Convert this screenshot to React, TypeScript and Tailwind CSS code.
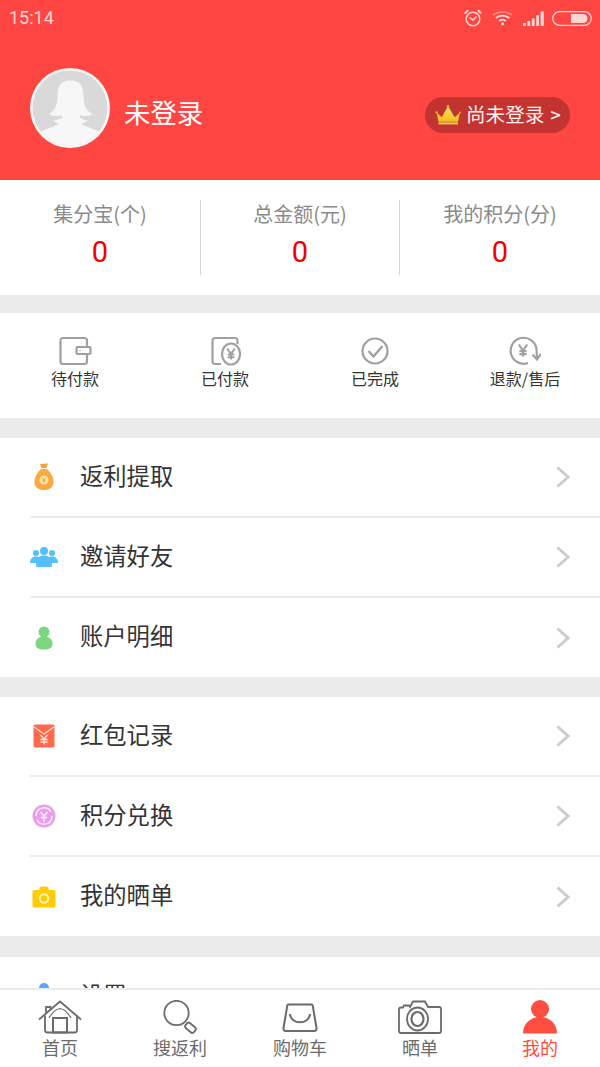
import React from 'react';

const FONT = '"Noto Sans CJK SC", Roboto, sans-serif';

const Alarm = () => (
  <svg width="18" height="18" viewBox="0 0 18 18" fill="none" stroke="#ffd6d4" strokeWidth="1.5">
    <circle cx="9" cy="10" r="6.8" />
    <path d="M5.5 8.5 L9 11 L12.5 7.5" />
    <path d="M0.8 4.5 L4.2 1.2 M17.2 4.5 L13.8 1.2" strokeWidth="2" />
  </svg>
);

const Wifi = () => (
  <svg width="21" height="16" viewBox="0 0 22 16" fill="none">
    <path d="M1 5 C6 0.5 16 0.5 21 5" stroke="#ff8f8b" strokeWidth="1.6" />
    <path d="M4 8 C8 4.6 14 4.6 18 8" stroke="#ffe2e0" strokeWidth="1.8" />
    <path d="M7.5 11 C9.5 9.4 12.5 9.4 14.5 11" stroke="#ffe2e0" strokeWidth="1.8" />
    <circle cx="11" cy="14" r="1.6" fill="#ffe2e0" />
  </svg>
);

const Signal = () => (
  <svg width="21" height="15" viewBox="0 0 21 15" fill="#ffd6d4">
    <rect x="0" y="12" width="2.8" height="3" />
    <rect x="4.4" y="10" width="2.8" height="5" />
    <rect x="8.8" y="7.5" width="2.8" height="7.5" />
    <rect x="13.2" y="4" width="2.8" height="11" />
    <rect x="17.6" y="0.5" width="3.2" height="14.5" />
  </svg>
);

const Battery = () => (
  <svg width="40" height="15" viewBox="0 0 40 15" fill="none">
    <rect x="0.7" y="0.7" width="38.6" height="13.6" rx="6.8" stroke="#ffd6d4" strokeWidth="1.3" />
    <path d="M19 3 H31 a4.5 4.5 0 0 1 0 9 H19 Z" fill="#ffd6d4" />
  </svg>
);

const Avatar = () => (
  <svg width="80" height="80" viewBox="0 0 80 80">
    <circle cx="40" cy="40" r="40" fill="#f7f7f7" />
    <circle cx="40" cy="40" r="37.5" fill="#d9d9d9" />
    <clipPath id="av">
      <circle cx="40" cy="40" r="37.5" />
    </clipPath>
    <g clipPath="url(#av)" fill="#f7f7f7">
      <path d="M19 46 C23 44 26 40 27 34 C28 28 27 24 29 19 C31 14 35 12.5 40 12.5 C46 12.5 50 14 52 19 C54 24 53 28 54 34 C55 40 58 44 63 46 C61 48 54 48.5 50 47.5 L50 50 L58 53 L51 56 L68 63 L80 80 H0 L12 63 L29 56 L23 53 L32 50 L32 47.5 C27 48.5 21 48 19 46 Z" />
    </g>
  </svg>
);

const Crown = () => (
  <svg width="26" height="20" viewBox="0 0 26 20">
    <defs>
      <linearGradient id="crownFill" x1="0" y1="0" x2="0" y2="1">
        <stop offset="0" stopColor="#ffe766" />
        <stop offset="1" stopColor="#f6bb1a" />
      </linearGradient>
    </defs>
    <path d="M1.7 7.7 L6.7 12.3 L13 1 L19.7 12.3 L25 7.7 L23 16.7 H3.5 Z" fill="url(#crownFill)" />
    <rect x="3.5" y="17.4" width="19.5" height="2" fill="#f8d24a" />
    <circle cx="13" cy="1.5" r="1.4" fill="#f5a623" />
    <circle cx="1.7" cy="7.5" r="1.3" fill="#f5a623" />
    <circle cx="25" cy="7.5" r="1" fill="#f5a623" />
  </svg>
);

const Wallet = () => (
  <svg width="34" height="30" viewBox="0 0 34 30" fill="none" stroke="#a0a0a0" strokeWidth="2.2">
    <path d="M29 10.5 V4.5 a2.5 2.5 0 0 0 -2.5 -2.5 H5 A2.5 2.5 0 0 0 2.5 4.5 V25.5 a2.5 2.5 0 0 0 2.5 2.5 H26.5 A2.5 2.5 0 0 0 29 25.5 V18" />
    <rect x="18.5" y="11" width="14" height="7" rx="1.2" />
    <circle cx="22" cy="14.5" r="0.7" fill="#a0a0a0" stroke="none" />
  </svg>
);

const Yen = ({ x, y, h }: { x: number; y: number; h: number }) => (
  <g stroke="#a0a0a0" strokeWidth="1.8" fill="none" transform={`translate(${x} ${y}) scale(${h / 10})`}>
    <path d="M-3.5 -5 L0 0 L3.5 -5 M0 0 V5 M-3 0.5 H3 M-3 3 H3" />
  </g>
);

const Paid = () => (
  <svg width="32" height="30" viewBox="-2 0 32 30" fill="none" stroke="#a0a0a0" strokeWidth="2.2">
    <path d="M10 28 H4 A2.5 2.5 0 0 1 1.5 25.5 V4.5 A2.5 2.5 0 0 1 4 2 H24 A2.5 2.5 0 0 1 26.5 4.5 V8" />
    <ellipse cx="20" cy="18" rx="9" ry="10.5" />
    <Yen x={20} y={18} h={11} />
  </svg>
);

const Done = () => (
  <svg width="28" height="30" viewBox="0 0 28 30" fill="none" stroke="#a0a0a0" strokeWidth="2.2">
    <circle cx="14" cy="15" r="12.5" />
    <path d="M7.5 15 L12.5 20.5 L21.5 10" strokeWidth="2.4" />
  </svg>
);

const Refund = () => (
  <svg width="32" height="30" viewBox="0 0 32 30" fill="none" stroke="#a0a0a0" strokeWidth="2.2">
    <path d="M19 27 A13 13 0 1 1 27.5 13 L28 23.5" />
    <path d="M23.5 18.5 L28 23.5 L32 18" />
    <Yen x={14} y={14.5} h={12} />
  </svg>
);

const MoneyBag = () => (
  <svg width="20" height="28" viewBox="0 0 20 28">
    <path d="M6 1 L14 0.5 L12.5 5 H7.5 Z" fill="#f2a33a" />
    <path d="M7 6 H13 C17 10 19.5 14 19.5 19 C19.5 24.5 15.5 27 10 27 C4.5 27 0.5 24.5 0.5 19 C0.5 14 3 10 7 6 Z" fill="#fba840" />
    <circle cx="10" cy="17" r="4.6" fill="#ffe2a8" />
    <path d="M8 14.5 L10 17 L12 14.5 M10 17 V20 M8.3 17.8 H11.7" stroke="#f2a33a" strokeWidth="0.9" fill="none" />
  </svg>
);

const Friends = () => (
  <svg width="28" height="20" viewBox="0 0 28 20" fill="#55c0fb">
    <circle cx="6" cy="6" r="3" />
    <circle cx="22" cy="6" r="3" />
    <circle cx="14" cy="4" r="4" />
    <path d="M0 16 C0 11 3 9.5 6 9.5 C9 9.5 12 11 12 16 H0 Z" />
    <path d="M16 16 C16 11 19 9.5 22 9.5 C25 9.5 28 11 28 16 H16 Z" />
    <path d="M6 19 C6 11 9 8.5 14 8.5 C19 8.5 22 11 22 19 Q22 20 20 20 H8 Q6 20 6 19 Z" />
  </svg>
);

const Person = () => (
  <svg width="18" height="24" viewBox="0 0 18 24" fill="#7bd67f">
    <circle cx="9" cy="6" r="5.5" />
    <path d="M0.5 18 C0.5 13 4 10.5 9 10.5 C14 10.5 17.5 13 17.5 18 C17.5 22 14 23.5 9 23.5 C4 23.5 0.5 22 0.5 18 Z" />
  </svg>
);

const RedPacket = () => (
  <svg width="22" height="24" viewBox="0 0 22 24">
    <rect x="0.5" y="0.5" width="21" height="23" rx="1.5" fill="#ff6a4d" />
    <path d="M1 3 L11 10 L21 3" stroke="#ffd9cf" strokeWidth="1.4" fill="none" />
    <path d="M7.5 11 L11 15 L14.5 11 M11 15 V20.5 M7.5 15.5 H14.5 M7.5 18 H14.5" stroke="#ffe8e2" strokeWidth="1.3" fill="none" />
  </svg>
);

const Exchange = () => (
  <svg width="24" height="24" viewBox="0 0 24 24">
    <circle cx="12" cy="12" r="11.5" fill="#e99fe9" />
    <path d="M4 12 A8 8 0 0 1 19 8 M20 12 A8 8 0 0 1 5 16" stroke="#fdeafd" strokeWidth="1.5" fill="none" />
    <path d="M8.5 8 L12 12 L15.5 8 M12 12 V18 M9 13.5 H15" stroke="#fdeafd" strokeWidth="1.5" fill="none" />
  </svg>
);

const CameraFill = () => (
  <svg width="24" height="22" viewBox="0 0 24 22">
    <path d="M2 4 H7 L8 1.5 Q8.5 0.5 9.5 0.5 H14.5 Q15.5 0.5 16 1.5 L17 4 H22 Q23.5 4 23.5 5.5 V20 Q23.5 21.5 22 21.5 H2 Q0.5 21.5 0.5 20 V5.5 Q0.5 4 2 4 Z" fill="#ffcc00" />
    <circle cx="12" cy="12.5" r="4.2" fill="none" stroke="#fff3c4" strokeWidth="2" />
  </svg>
);

const Chevron = () => (
  <svg width="14" height="22" viewBox="0 0 14 22" fill="none" stroke="#cccccc" strokeWidth="3">
    <path d="M1.5 1.5 L12 11 L1.5 20.5" />
  </svg>
);

const TabHome = () => (
  <svg width="44" height="34" viewBox="0 0 44 34" fill="none" stroke="#6b6b6b" strokeWidth="1.8">
    <path d="M1 19.5 L22 1.5 L43 19.5" />
    <path d="M8 13.5 V7 H12.5 V10" />
    <path d="M7 15.5 V30 A2.5 2.5 0 0 0 9.5 32.5 H36.5 A2.5 2.5 0 0 0 39 30 V15.5" />
    <path d="M11 18 C14 13 18 9 22 8.5 C26 9 30 13 33 18" strokeWidth="1.2" />
    <rect x="15" y="18" width="14" height="14.5" strokeWidth="2" />
  </svg>
);

const TabSearch = () => (
  <svg width="34" height="34" viewBox="0 0 34 34" fill="none" stroke="#6b6b6b" strokeWidth="1.8">
    <circle cx="13.5" cy="13" r="12.2" />
    <rect x="22" y="24.5" width="11" height="6.5" rx="2.4" transform="rotate(40 27.5 27.7)" />
  </svg>
);

const TabBag = () => (
  <svg width="36" height="30" viewBox="0 0 36 30" fill="none" stroke="#6b6b6b" strokeWidth="2">
    <path d="M6.5 2.5 H29.5 Q30.5 2.5 30.7 3.5 L34.5 26 Q34.8 29 32 29 H4 Q1.2 29 1.5 26 L5.3 3.5 Q5.5 2.5 6.5 2.5 Z" />
    <path d="M8 12 C9 23 27 23 28 12" />
  </svg>
);

const TabCamera = () => (
  <svg width="44" height="34" viewBox="0 0 44 34" fill="none" stroke="#6b6b6b" strokeWidth="1.8">
    <path d="M3 7.5 H5 L6 5.5 H11 L12 7 L15 1.5 H27 L30 7 H41 Q43 7 43 9 V31 Q43 33 41 33 H3 Q1 33 1 31 V9.5 Q1 7.5 3 7.5 Z" />
    <ellipse cx="19.5" cy="19" rx="10.5" ry="11.5" />
    <ellipse cx="19.5" cy="19" rx="6" ry="7" strokeWidth="2.2" />
  </svg>
);

const TabMe = () => (
  <svg width="34" height="34" viewBox="0 0 34 34" fill="#ff4d40">
    <circle cx="17" cy="9" r="9" />
    <path d="M0 33.5 C0 24 7 17 17 17 C27 17 34 24 34 33.5 Z" />
  </svg>
);

const stats = [
  { label: '集分宝(个)', value: '0', width: 'w-[201px] border-r border-[#d8d8d8]' },
  { label: '总金额(元)', value: '0', width: 'w-[199px] border-r border-[#d8d8d8]' },
  { label: '我的积分(分)', value: '0', width: 'w-[200px]' },
];

const orders = [
  { label: '待付款', icon: <Wallet /> },
  { label: '已付款', icon: <Paid /> },
  { label: '已完成', icon: <Done /> },
  { label: '退款/售后', icon: <Refund /> },
];

const tabs = [
  { label: '首页', icon: <TabHome /> },
  { label: '搜返利', icon: <TabSearch /> },
  { label: '购物车', icon: <TabBag /> },
  { label: '晒单', icon: <TabCamera /> },
  { label: '我的', icon: <TabMe />, active: true },
];

const Row = ({ icon, label, last }: { icon: React.ReactNode; label: string; last?: boolean }) => (
  <div className="pl-[30px]">
    <div className={`flex items-center ${last ? 'h-[79px]' : 'h-[80px] border-b-2 border-[#ececec]'}`}>
      <div className="flex w-[28px] justify-center">{icon}</div>
      <span className="ml-[22px] flex-1 pb-[3px] text-[23.3px] leading-none text-[#333333]">{label}</span>
      <div className="mr-[30px] flex">
        <Chevron />
      </div>
    </div>
  </div>
);

export default function App() {
  return (
    <div className="flex h-[1067px] w-[600px] flex-col overflow-hidden bg-white" style={{ fontFamily: FONT }}>
      <div className="min-h-0 flex-1 overflow-hidden">
        <header className="h-[180px] bg-[#ff4642]">
          <div className="flex h-[36px] items-center justify-between pl-[9px] pr-[8px]">
            <span className="text-[18px] leading-none text-[#ffd6d4]" style={{ fontFamily: 'Roboto, sans-serif' }}>15:14</span>
            <div className="flex items-center">
              <Alarm />
              <div className="ml-[10px] flex">
                <Wifi />
              </div>
              <div className="ml-[10px] flex">
                <Signal />
              </div>
              <div className="ml-[8px] flex">
                <Battery />
              </div>
            </div>
          </div>
          <div className="mt-[32px] flex items-center pl-[30px] pr-[30px]">
            <Avatar />
            <span className="ml-[14px] mt-[8px] flex-1 text-[26.4px] leading-none text-white">未登录</span>
            <div className="mt-[14px] flex h-[36px] w-[145px] items-center rounded-full bg-[#c33430] pl-[10px] text-[#fff0ef]">
              <Crown />
              <span className="ml-[5px] pb-[2px] text-[19.6px] leading-none">尚未登录</span>
              <span className="ml-[6px] pb-[2px] text-[18px] font-medium leading-none">&gt;</span>
            </div>
          </div>
        </header>

        <section className="flex h-[115px] items-center">
          {stats.map((s) => (
            <div
              key={s.label}
              className={`flex h-[75px] flex-col items-center pb-[5px] ${s.width}`}
            >
              <span className="text-[20px] leading-[28px] text-[#8a8a8a]">{s.label}</span>
              <span className="mt-[6px] text-[29px] leading-[36px] text-[#ee0000]" style={{ fontFamily: 'Roboto, sans-serif' }}>{s.value}</span>
            </div>
          ))}
        </section>

        <div className="h-[18px] bg-[#ebebeb]" />

        <section className="grid h-[105px] grid-cols-4 pt-[23px]">
          {orders.map((o) => (
            <div key={o.label} className="flex flex-col items-center">
              <div className="flex h-[30px] items-center">{o.icon}</div>
              <span className="mt-[1px] text-[16px] leading-[22px] text-[#333333]">{o.label}</span>
            </div>
          ))}
        </section>

        <div className="h-[20px] bg-[#ebebeb]" />

        <Row icon={<MoneyBag />} label="返利提取" />
        <Row icon={<Friends />} label="邀请好友" />
        <Row icon={<Person />} label="账户明细" last />

        <div className="h-[20px] bg-[#ebebeb]" />

        <Row icon={<RedPacket />} label="红包记录" />
        <Row icon={<Exchange />} label="积分兑换" />
        <Row icon={<CameraFill />} label="我的晒单" last />

        <div className="h-[21px] bg-[#ebebeb]" />

        <div className="flex items-start pl-[30px] pt-[26px]">
          <div className="flex w-[28px] justify-center">
            <div className="h-[10px] w-[10px] rounded-full bg-[#55a8fb]" />
          </div>
          <span className="ml-[22px] text-[23.3px] leading-none text-[#333333]">设置</span>
        </div>
      </div>

      <nav className="grid h-[79px] shrink-0 grid-cols-5 border-t-2 border-[#ececec] bg-white pt-[10px]">
        {tabs.map((t) => (
          <div key={t.label} className="flex flex-col items-center">
            <div className="flex h-[34px] items-center">{t.icon}</div>
            <span className={`mt-[1px] text-[18px] leading-[24px] ${t.active ? 'text-[#ff4d40]' : 'text-[#6b6b6b]'}`}>{t.label}</span>
          </div>
        ))}
      </nav>
    </div>
  );
}
